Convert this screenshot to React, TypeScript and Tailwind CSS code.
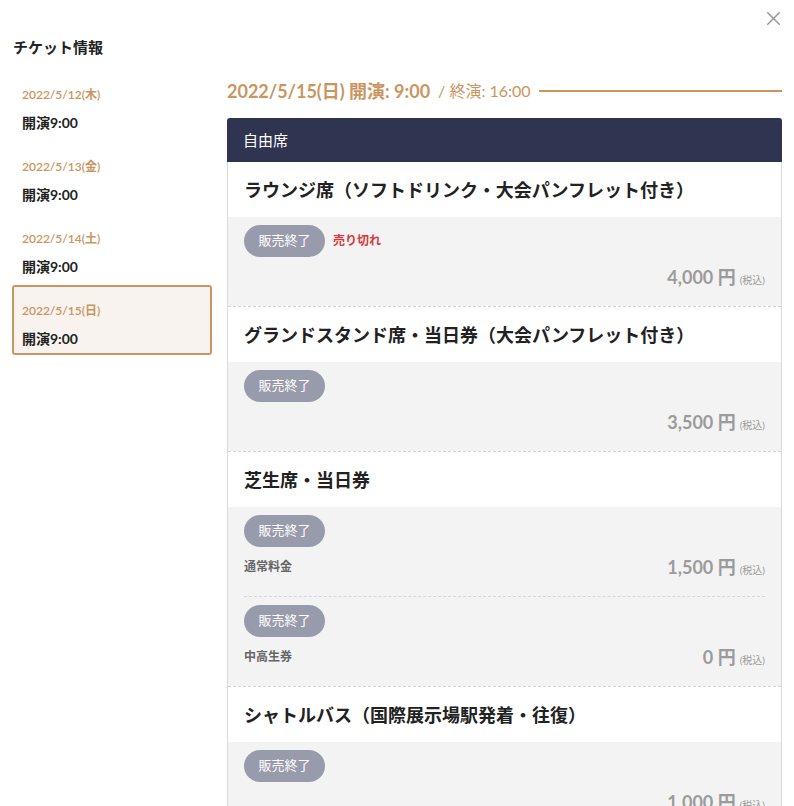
import React, { useState } from "react"
import { X } from "lucide-react"

type Tier = { label?: string; price: string; soldOut?: boolean }
type Ticket = { name: string; tiers: Tier[] }

const dates = [
  { date: "2022/5/12(木)", open: "開演9:00" },
  { date: "2022/5/13(金)", open: "開演9:00" },
  { date: "2022/5/14(土)", open: "開演9:00" },
  { date: "2022/5/15(日)", open: "開演9:00" },
]

const tickets: Ticket[] = [
  {
    name: "ラウンジ席（ソフトドリンク・大会パンフレット付き）",
    tiers: [{ price: "4,000", soldOut: true }],
  },
  {
    name: "グランドスタンド席・当日券（大会パンフレット付き）",
    tiers: [{ price: "3,500" }],
  },
  {
    name: "芝生席・当日券",
    tiers: [
      { label: "通常料金", price: "1,500" },
      { label: "中高生券", price: "0" },
    ],
  },
  {
    name: "シャトルバス（国際展示場駅発着・往復）",
    tiers: [{ price: "1,000" }],
  },
]

function TierRow({ tier, last }: { tier: Tier; last: boolean }) {
  return (
    <div
      className={`pt-2 pb-[17px] ${last ? "" : "border-b border-dashed border-[#d6d6d6]"}`}
    >
      <div className="flex items-center gap-2">
        <span className="inline-flex h-8 w-[81px] items-center justify-center rounded-full bg-[#989bab] text-[13px] text-white">
          販売終了
        </span>
        {tier.soldOut && (
          <span className="text-[12px] font-bold text-[#d9393e]">売り切れ</span>
        )}
      </div>
      <div className="mt-2 flex h-6 items-center justify-between">
        <span className="text-[12px] font-semibold text-[#666]">{tier.label}</span>
        <span className="flex items-baseline text-[#9b9b9b]">
          <span className="text-[18px] font-bold">{tier.price} 円</span>
          <span className="ml-1 text-[10px]">(税込)</span>
        </span>
      </div>
    </div>
  )
}

export default function App() {
  const [active, setActive] = useState(3)

  return (
    <div
      className="relative h-[806px] overflow-hidden bg-white px-3 text-[#222]"
      style={{ fontFamily: "Lato, 'Noto Sans CJK JP', sans-serif" }}
    >
      <button className="absolute right-[9px] top-[7px] text-[#9a9a9a]">
        <X size={23} strokeWidth={1.6} />
      </button>

      <div className="flex gap-[15px]">
        {/* Date list */}
        <div className="w-[200px] shrink-0">
          <h2 className="mt-[36px] pl-[1px] text-[15px] font-bold leading-[22px]">
            チケット情報
          </h2>
          <div className="mt-[11px] flex flex-col gap-[2px]">
            {dates.map((d, i) => (
              <button
                key={d.date}
                onClick={() => setActive(i)}
                className={`h-[70px] rounded-[3px] border-2 pl-2 pt-[10px] text-left ${
                  i === active ? "border-[#cd955c] bg-[#f8f3ee]" : "border-transparent"
                }`}
              >
                <div className="text-[12px] font-semibold leading-[20px] text-[#c99560]">
                  {d.date}
                </div>
                <div className="mt-[8px] text-[14px] font-bold leading-[20px]">
                  {d.open}
                </div>
              </button>
            ))}
          </div>
        </div>

        {/* Ticket list */}
        <div className="min-w-0 flex-1 pt-[79px]">
          <div className="mb-[15px] flex h-6 items-center text-[#c99560]">
            <span className="text-[18px] font-bold">2022/5/15(日) 開演: 9:00</span>
            <span className="ml-2 text-[16px]">/ 終演: 16:00</span>
            <span className="ml-2 h-[2px] flex-1 bg-[#cd955c]" />
          </div>

          <div className="flex h-11 items-center rounded-t-[3px] bg-[#2f3551] px-4 text-[15px] text-white">
            自由席
          </div>
          <div className="border-x border-[#d9dbe2]">
            {tickets.map((t) => (
              <div key={t.name} className="border-b border-dashed border-[#d6d6d6]">
                <div className="bg-white px-4 pt-[17px] pb-[15px] text-[18px] font-bold leading-[23px]">
                  {t.name}
                </div>
                <div className="bg-[#f3f3f3] px-4">
                  {t.tiers.map((tier, i) => (
                    <TierRow key={i} tier={tier} last={i === t.tiers.length - 1} />
                  ))}
                </div>
              </div>
            ))}
          </div>
        </div>
      </div>
    </div>
  )
}
